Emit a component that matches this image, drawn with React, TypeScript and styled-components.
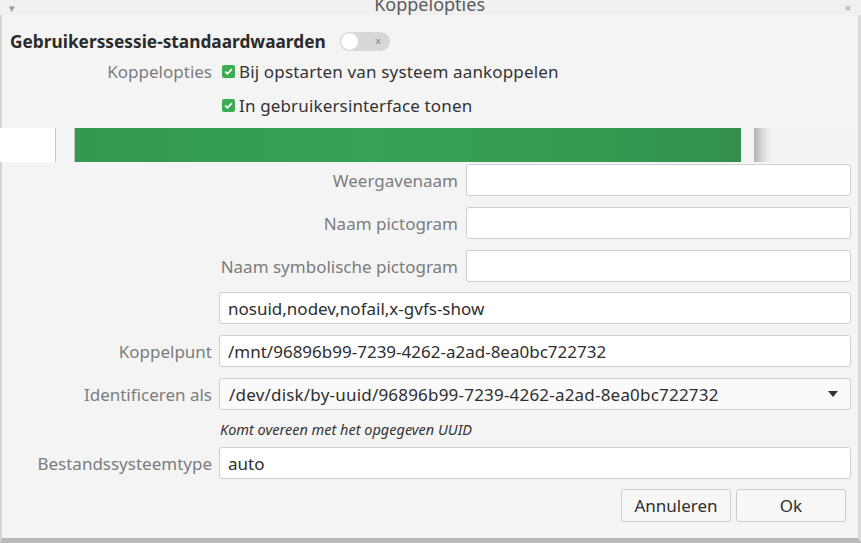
import React from "react";
import styled, { createGlobalStyle } from "styled-components";

const GlobalStyle = createGlobalStyle`
  html, body {
    margin: 0;
    padding: 0;
    background: #f4f4f4;
  }
  body {
    font-family: "Noto Sans", "DejaVu Sans", sans-serif;
    font-size: 17px;
    color: #333333;
  }
`;

const Window = styled.div`
  width: 861px;
  height: 543px;
  display: flex;
  flex-direction: column;
  background: #f4f4f4;
  overflow: hidden;
`;

const TitleBar = styled.div`
  height: 15px;
  flex: 0 0 15px;
  display: flex;
  align-items: flex-end;
  justify-content: space-between;
  padding: 0 10px 0 9px;
  background: #f0f0f0;
  overflow: hidden;
`;

const TitleGlyph = styled.span`
  align-self: center;
  font-size: 11px;
  line-height: 12px;
  color: #9a9a9a;
`;

const Title = styled.div`
  font-size: 18px;
  color: #5a5a5a;
  line-height: 18px;
  margin-bottom: 2px;
`;

const Panel = styled.div<{ $bottom?: boolean }>`
  border-left: 2px solid #d4d4d4;
  border-right: 3px solid #dadada;
  border-bottom: ${(p) => (p.$bottom ? "5px solid #b9b9b9" : "none")};
  display: flex;
  flex-direction: column;
  flex: ${(p) => (p.$bottom ? "1" : "0 0 auto")};
`;

const Header = styled.div`
  display: flex;
  align-items: center;
  gap: 14px;
  height: 20px;
  margin: 16px 0 0 8px;
`;

const Heading = styled.div`
  font-weight: bold;
  font-size: 17.3px;
  color: #2b2b2b;
`;

const Switch = styled.div`
  position: relative;
  width: 50px;
  height: 19px;
  border-radius: 10px;
  background: #d8d8d8;
  color: #8c8c8c;
  font-size: 12px;
  display: flex;
  align-items: center;
  justify-content: flex-end;
  padding-right: 8px;
  box-sizing: border-box;
`;

const Knob = styled.div`
  position: absolute;
  left: 0;
  top: 0;
  width: 19px;
  height: 19px;
  border-radius: 50%;
  background: #ffffff;
  box-shadow: 0 0 0 1px #cfcfcf inset;
`;

const CheckGrid = styled.div`
  display: grid;
  grid-template-columns: 210px auto;
  column-gap: 10px;
  margin-top: 3px;
  padding-bottom: 6px;
`;

const Label = styled.div`
  color: #7c7c7c;
  text-align: right;
  white-space: nowrap;
  display: flex;
  align-items: center;
  justify-content: flex-end;
`;

const CheckRow = styled.label`
  display: flex;
  align-items: center;
  gap: 4px;
  height: 34px;
  color: #333;
  letter-spacing: 0.15px;
`;

const Box = styled.span`
  width: 13px;
  height: 13px;
  border-radius: 2px;
  background: #3cad52;
  display: inline-flex;
  align-items: center;
  justify-content: center;
`;

const Band = styled.div`
  height: 34px;
  flex: 0 0 34px;
  display: flex;
  background: #f4f4f4;
`;

const BandWhite = styled.div`
  width: 55px;
  background: #ffffff;
  border-right: 1px solid #c6c6c6;
`;

const BandGreen = styled.div`
  width: 666px;
  margin-left: 18px;
  border-left: 1px solid #c8c8c8;
  background: linear-gradient(90deg, #329a4e 0%, #36a254 45%, #349a50 80%, #33904c 100%);
`;

const BandRest = styled.div`
  flex: 1;
  margin-left: 13px;
  background: linear-gradient(90deg, #b4b4b4 0px, #e6e6e6 12px, #f2f2f2 18px);
  border-right: 3px solid #dadada;
`;

const Form = styled.div<{ $label: number; $top: number }>`
  display: grid;
  grid-template-columns: ${(p) => p.$label}px 1fr;
  column-gap: ${(p) => (p.$label > 300 ? 8 : 7)}px;
  row-gap: 11px;
  margin-top: ${(p) => p.$top}px;
  padding-right: 7px;
`;

const Input = styled.div<{ $combo?: boolean }>`
  height: 32px;
  box-sizing: border-box;
  border: 1px solid #cecece;
  border-radius: 3px;
  background: ${(p) => (p.$combo ? "#fafafa" : "#ffffff")};
  display: flex;
  align-items: center;
  justify-content: space-between;
  padding: 0 ${(p) => (p.$combo ? "12px" : "8px")} 0 ${(p) => (p.$combo ? "9px" : "8px")};
  color: #2e2e2e;
  white-space: nowrap;
  letter-spacing: ${(p) => (p.$combo ? "0.2px" : "0")};
`;

const Arrow = styled.span`
  width: 0;
  height: 0;
  border-left: 5px solid transparent;
  border-right: 5px solid transparent;
  border-top: 6px solid #333;
`;

const Hint = styled.div`
  grid-column: 2;
  font-style: italic;
  font-size: 14.5px;
  color: #333;
  margin: -2px 0 -3px 1px;
  height: 20px;
  display: flex;
  align-items: center;
`;

const Buttons = styled.div`
  display: flex;
  justify-content: flex-end;
  gap: 5px;
  margin-top: 10px;
  padding-right: 12px;
`;

const Button = styled.button`
  width: 110px;
  height: 33px;
  box-sizing: border-box;
  border: 1px solid #cdcdcd;
  border-radius: 3px;
  background: #f7f7f7;
  font-family: inherit;
  font-size: 17px;
  color: #2e2e2e;
  padding: 0;
`;

const Check = () => (
  <Box>
    <svg width="9" height="9" viewBox="0 0 9 9">
      <path d="M1.2 4.6 L3.5 6.8 L7.8 2.2" stroke="#fff" strokeWidth="1.7" fill="none" />
    </svg>
  </Box>
);

export default function App() {
  return (
    <>
      <GlobalStyle />
      <Window>
        <TitleBar>
          <TitleGlyph>▾</TitleGlyph>
          <Title>Koppelopties</Title>
          <TitleGlyph>×</TitleGlyph>
        </TitleBar>
        <Panel>
          <Header>
            <Heading>Gebruikerssessie-standaardwaarden</Heading>
            <Switch>
              <Knob />×
            </Switch>
          </Header>
          <CheckGrid>
            <Label>Koppelopties</Label>
            <CheckRow>
              <Check />
              Bij opstarten van systeem aankoppelen
            </CheckRow>
            <span />
            <CheckRow>
              <Check />
              In gebruikersinterface tonen
            </CheckRow>
          </CheckGrid>
        </Panel>
        <Band>
          <BandWhite />
          <BandGreen />
          <BandRest />
        </Band>
        <Panel $bottom>
          <Form $label={456} $top={2}>
            <Label>Weergavenaam</Label>
            <Input />
            <Label>Naam pictogram</Label>
            <Input />
            <Label>Naam symbolische pictogram</Label>
            <Input />
          </Form>
          <Form $label={210} $top={10}>
            <span />
            <Input>nosuid,nodev,nofail,x-gvfs-show</Input>
            <Label>Koppelpunt</Label>
            <Input>/mnt/96896b99-7239-4262-a2ad-8ea0bc722732</Input>
            <Label>Identificeren als</Label>
            <Input $combo>
              /dev/disk/by-uuid/96896b99-7239-4262-a2ad-8ea0bc722732
              <Arrow />
            </Input>
            <Hint>Komt overeen met het opgegeven UUID</Hint>
            <Label>Bestandssysteemtype</Label>
            <Input>auto</Input>
          </Form>
          <Buttons>
            <Button>Annuleren</Button>
            <Button>Ok</Button>
          </Buttons>
        </Panel>
      </Window>
    </>
  );
}
